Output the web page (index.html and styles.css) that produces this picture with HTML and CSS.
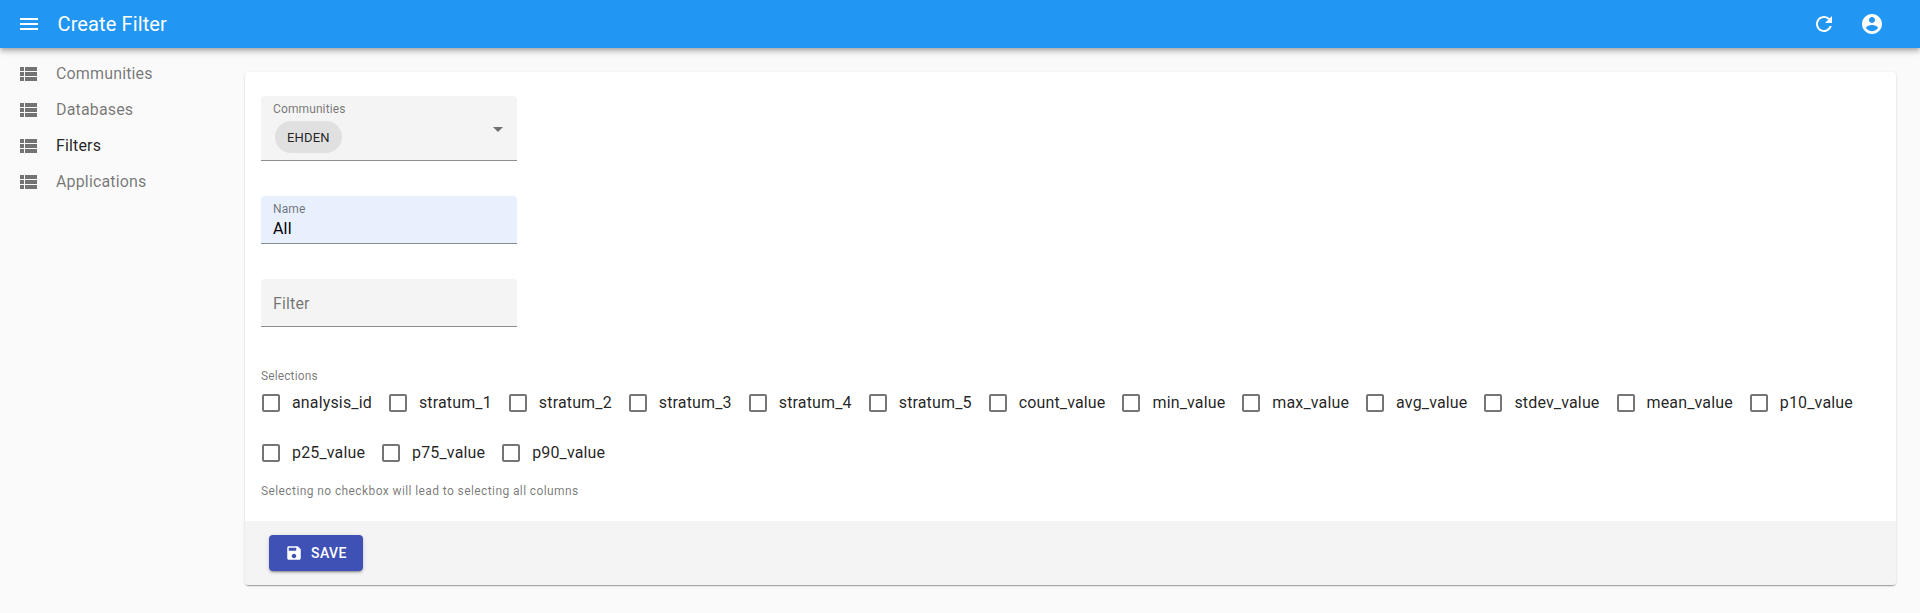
FILE: index.html
```html
<!DOCTYPE html>
<html lang="en">
<head>
<meta charset="utf-8">
<title>Create Filter</title>
<link rel="stylesheet" href="styles.css">
</head>
<body>
<header class="appbar">
  <svg class="icon menu" viewBox="0 0 24 24"><path d="M3 18h18v-2H3v2zm0-5h18v-2H3v2zm0-7v2h18V6H3z"/></svg>
  <h1 class="title">Create Filter</h1>
  <svg class="icon refresh" viewBox="0 0 24 24"><path d="M17.65 6.35C16.2 4.9 14.21 4 12 4c-4.42 0-7.99 3.58-7.99 8s3.57 8 7.99 8c3.73 0 6.84-2.55 7.73-6h-2.08c-.82 2.33-3.04 4-5.65 4-3.31 0-6-2.69-6-6s2.69-6 6-6c1.66 0 3.14.69 4.22 1.78L13 11h7V4l-2.35 2.35z"/></svg>
  <svg class="icon account" viewBox="0 0 24 24"><path d="M12 2C6.48 2 2 6.48 2 12s4.48 10 10 10 10-4.48 10-10S17.52 2 12 2zm0 3c1.66 0 3 1.34 3 3s-1.34 3-3 3-3-1.34-3-3 1.34-3 3-3zm0 14.2c-2.5 0-4.71-1.28-6-3.22.03-1.99 4-3.08 6-3.08 1.99 0 5.97 1.09 6 3.08-1.29 1.94-3.5 3.22-6 3.22z"/></svg>
</header>
<div class="layout">
  <nav class="sidebar">
    <a class="nav-item"><svg class="icon" viewBox="0 0 24 24"><path d="M4 14h4v-4H4v4zm0 5h4v-4H4v4zM4 9h4V5H4v4zm5 5h12v-4H9v4zm0 5h12v-4H9v4zM9 5v4h12V5H9z"/></svg>Communities</a>
    <a class="nav-item"><svg class="icon" viewBox="0 0 24 24"><path d="M4 14h4v-4H4v4zm0 5h4v-4H4v4zM4 9h4V5H4v4zm5 5h12v-4H9v4zm0 5h12v-4H9v4zM9 5v4h12V5H9z"/></svg>Databases</a>
    <a class="nav-item active"><svg class="icon" viewBox="0 0 24 24"><path d="M4 14h4v-4H4v4zm0 5h4v-4H4v4zM4 9h4V5H4v4zm5 5h12v-4H9v4zm0 5h12v-4H9v4zM9 5v4h12V5H9z"/></svg>Filters</a>
    <a class="nav-item"><svg class="icon" viewBox="0 0 24 24"><path d="M4 14h4v-4H4v4zm0 5h4v-4H4v4zM4 9h4V5H4v4zm5 5h12v-4H9v4zm0 5h12v-4H9v4zM9 5v4h12V5H9z"/></svg>Applications</a>
  </nav>
  <main class="card">
    <div class="form">
      <div class="field select">
        <div class="select-value"><span class="label">Communities</span><span class="chip">EHDEN</span></div>
        <svg class="icon" viewBox="0 0 24 24"><path d="M7 10l5 5 5-5z"/></svg>
      </div>
      <div class="field filled"><span class="label">Name</span><span class="value">All</span></div>
      <div class="field empty">Filter</div>
      <div class="legend">Selections</div>
      <div class="checks">
        <label class="check"><svg class="icon" viewBox="0 0 24 24"><path d="M19 5v14H5V5h14m0-2H5c-1.100 0-2 .9-2 2v14c0 1.100.9 2 2 2h14c1.100 0 2-.9 2-2V5c0-1.100-.9-2-2-2z"/></svg>analysis_id</label>
        <label class="check"><svg class="icon" viewBox="0 0 24 24"><path d="M19 5v14H5V5h14m0-2H5c-1.100 0-2 .9-2 2v14c0 1.100.9 2 2 2h14c1.100 0 2-.9 2-2V5c0-1.100-.9-2-2-2z"/></svg>stratum_1</label>
        <label class="check"><svg class="icon" viewBox="0 0 24 24"><path d="M19 5v14H5V5h14m0-2H5c-1.100 0-2 .9-2 2v14c0 1.100.9 2 2 2h14c1.100 0 2-.9 2-2V5c0-1.100-.9-2-2-2z"/></svg>stratum_2</label>
        <label class="check"><svg class="icon" viewBox="0 0 24 24"><path d="M19 5v14H5V5h14m0-2H5c-1.100 0-2 .9-2 2v14c0 1.100.9 2 2 2h14c1.100 0 2-.9 2-2V5c0-1.100-.9-2-2-2z"/></svg>stratum_3</label>
        <label class="check"><svg class="icon" viewBox="0 0 24 24"><path d="M19 5v14H5V5h14m0-2H5c-1.100 0-2 .9-2 2v14c0 1.100.9 2 2 2h14c1.100 0 2-.9 2-2V5c0-1.100-.9-2-2-2z"/></svg>stratum_4</label>
        <label class="check"><svg class="icon" viewBox="0 0 24 24"><path d="M19 5v14H5V5h14m0-2H5c-1.100 0-2 .9-2 2v14c0 1.100.9 2 2 2h14c1.100 0 2-.9 2-2V5c0-1.100-.9-2-2-2z"/></svg>stratum_5</label>
        <label class="check"><svg class="icon" viewBox="0 0 24 24"><path d="M19 5v14H5V5h14m0-2H5c-1.100 0-2 .9-2 2v14c0 1.100.9 2 2 2h14c1.100 0 2-.9 2-2V5c0-1.100-.9-2-2-2z"/></svg>count_value</label>
        <label class="check"><svg class="icon" viewBox="0 0 24 24"><path d="M19 5v14H5V5h14m0-2H5c-1.100 0-2 .9-2 2v14c0 1.100.9 2 2 2h14c1.100 0 2-.9 2-2V5c0-1.100-.9-2-2-2z"/></svg>min_value</label>
        <label class="check"><svg class="icon" viewBox="0 0 24 24"><path d="M19 5v14H5V5h14m0-2H5c-1.100 0-2 .9-2 2v14c0 1.100.9 2 2 2h14c1.100 0 2-.9 2-2V5c0-1.100-.9-2-2-2z"/></svg>max_value</label>
        <label class="check"><svg class="icon" viewBox="0 0 24 24"><path d="M19 5v14H5V5h14m0-2H5c-1.100 0-2 .9-2 2v14c0 1.100.9 2 2 2h14c1.100 0 2-.9 2-2V5c0-1.100-.9-2-2-2z"/></svg>avg_value</label>
        <label class="check"><svg class="icon" viewBox="0 0 24 24"><path d="M19 5v14H5V5h14m0-2H5c-1.100 0-2 .9-2 2v14c0 1.100.9 2 2 2h14c1.100 0 2-.9 2-2V5c0-1.100-.9-2-2-2z"/></svg>stdev_value</label>
        <label class="check"><svg class="icon" viewBox="0 0 24 24"><path d="M19 5v14H5V5h14m0-2H5c-1.100 0-2 .9-2 2v14c0 1.100.9 2 2 2h14c1.100 0 2-.9 2-2V5c0-1.100-.9-2-2-2z"/></svg>mean_value</label>
        <label class="check"><svg class="icon" viewBox="0 0 24 24"><path d="M19 5v14H5V5h14m0-2H5c-1.100 0-2 .9-2 2v14c0 1.100.9 2 2 2h14c1.100 0 2-.9 2-2V5c0-1.100-.9-2-2-2z"/></svg>p10_value</label>
        <label class="check"><svg class="icon" viewBox="0 0 24 24"><path d="M19 5v14H5V5h14m0-2H5c-1.100 0-2 .9-2 2v14c0 1.100.9 2 2 2h14c1.100 0 2-.9 2-2V5c0-1.100-.9-2-2-2z"/></svg>p25_value</label>
        <label class="check"><svg class="icon" viewBox="0 0 24 24"><path d="M19 5v14H5V5h14m0-2H5c-1.100 0-2 .9-2 2v14c0 1.100.9 2 2 2h14c1.100 0 2-.9 2-2V5c0-1.100-.9-2-2-2z"/></svg>p75_value</label>
        <label class="check"><svg class="icon" viewBox="0 0 24 24"><path d="M19 5v14H5V5h14m0-2H5c-1.100 0-2 .9-2 2v14c0 1.100.9 2 2 2h14c1.100 0 2-.9 2-2V5c0-1.100-.9-2-2-2z"/></svg>p90_value</label>
      </div>
      <p class="helper">Selecting no checkbox will lead to selecting all columns</p>
    </div>
    <footer class="toolbar">
      <button class="save"><svg class="icon" viewBox="0 0 24 24"><path d="M17 3H5c-1.110 0-2 .9-2 2v14c0 1.100.89 2 2 2h14c1.100 0 2-.9 2-2V7l-4-4zm-5 16c-1.660 0-3-1.340-3-3s1.340-3 3-3 3 1.340 3 3-1.340 3-3 3zm3-10H5V5h10v4z"/></svg>Save</button>
    </footer>
  </main>
</div>
</body>
</html>
```
FILE: styles.css
```css
* { box-sizing: border-box; }
body {
  margin: 0;
  height: 613px;
  overflow: hidden;
  background: #fafafa;
  color: rgba(0, 0, 0, .87);
  font: 400 16px/24px Roboto, sans-serif;
  letter-spacing: .15008px;
}
.icon { display: block; flex: none; width: 24px; height: 24px; fill: currentColor; }
.appbar {
  position: relative;
  display: flex;
  align-items: center;
  height: 48px;
  padding: 0 36px 0 17px;
  background: #2196f3;
  color: #fff;
  box-shadow: 0 2px 4px -1px rgba(0,0,0,.2), 0 4px 5px rgba(0,0,0,.14), 0 1px 10px rgba(0,0,0,.12);
}
.title { flex: 1; margin: 0 0 0 16.5px; font-size: 20px; font-weight: 400; line-height: 32px; letter-spacing: .12px; }
.account { margin-left: 24px; }
.layout { display: flex; align-items: flex-start; }
.sidebar { width: 245px; padding-top: 8px; flex: none; }
.nav-item { display: flex; align-items: center; gap: 16px; height: 36px; padding-left: 16px; color: rgba(0,0,0,.54); }
.nav-item.active { color: rgba(0,0,0,.87); }
.nav-item .icon { color: rgba(0,0,0,.54); }
.card {
  width: 1651px;
  margin-top: 24px;
  background: #fff;
  border-radius: 4px;
  box-shadow: 0 2px 1px -1px rgba(0,0,0,.2), 0 1px 1px rgba(0,0,0,.14), 0 1px 3px rgba(0,0,0,.12);
}
.form { height: 449px; padding: 24px 16px 0; }
.field {
  width: 256px;
  height: 48px;
  margin-bottom: 35px;
  padding: 0 12px;
  border-bottom: 1px solid rgba(0,0,0,.42);
  border-radius: 4px 4px 0 0;
  background: #f4f4f4;
}
.label { display: block; font-size: 12px; line-height: 12px; letter-spacing: .113px; color: rgba(0,0,0,.54); }
.select { display: flex; justify-content: space-between; align-items: flex-start; height: 65px; padding: 7px 7px 0 12px; }
.select .icon { margin-top: 14px; color: rgba(0,0,0,.54); }
.chip { display: block; width: fit-content; height: 32px; margin: 6px 0 0 2px; padding: 0 12px; border-radius: 16px; background: #e0e0e0; font-size: 13px; line-height: 34px; }
.filled { padding-top: 7px; background: #e8f0fe; }
.value { display: block; line-height: 19px; margin-top: 4px; color: #000; }
.empty { padding-top: 1px; line-height: 48px; color: rgba(0,0,0,.54); }
.legend { margin-top: 43px; font-size: 12px; line-height: 12px; letter-spacing: .113px; color: rgba(0,0,0,.54); }
.checks { display: flex; flex-wrap: wrap; margin: -4px -16px 0 -11px; }
.check { display: flex; align-items: center; gap: 9px; height: 50px; padding-left: 9px; margin-right: 5px; }
.check .icon { color: rgba(0,0,0,.54); }
.helper { margin: 3px 0 0; font-size: 12px; line-height: 20px; letter-spacing: .4px; color: rgba(0,0,0,.54); }
.toolbar { display: flex; align-items: center; height: 64px; padding: 0 24px; background: #f4f4f4; border-radius: 0 0 4px 4px; }
.save {
  display: flex; align-items: center; gap: 8px;
  height: 36px; padding: 0 16px; border: 0; border-radius: 4px;
  background: #3f51b5; color: #fff;
  font: 500 14px/24px Roboto, sans-serif; letter-spacing: .4px; text-transform: uppercase;
  box-shadow: 0 3px 1px -2px rgba(0,0,0,.2), 0 2px 2px rgba(0,0,0,.14), 0 1px 5px rgba(0,0,0,.12);
}
.save .icon { width: 18px; height: 18px; }
```
